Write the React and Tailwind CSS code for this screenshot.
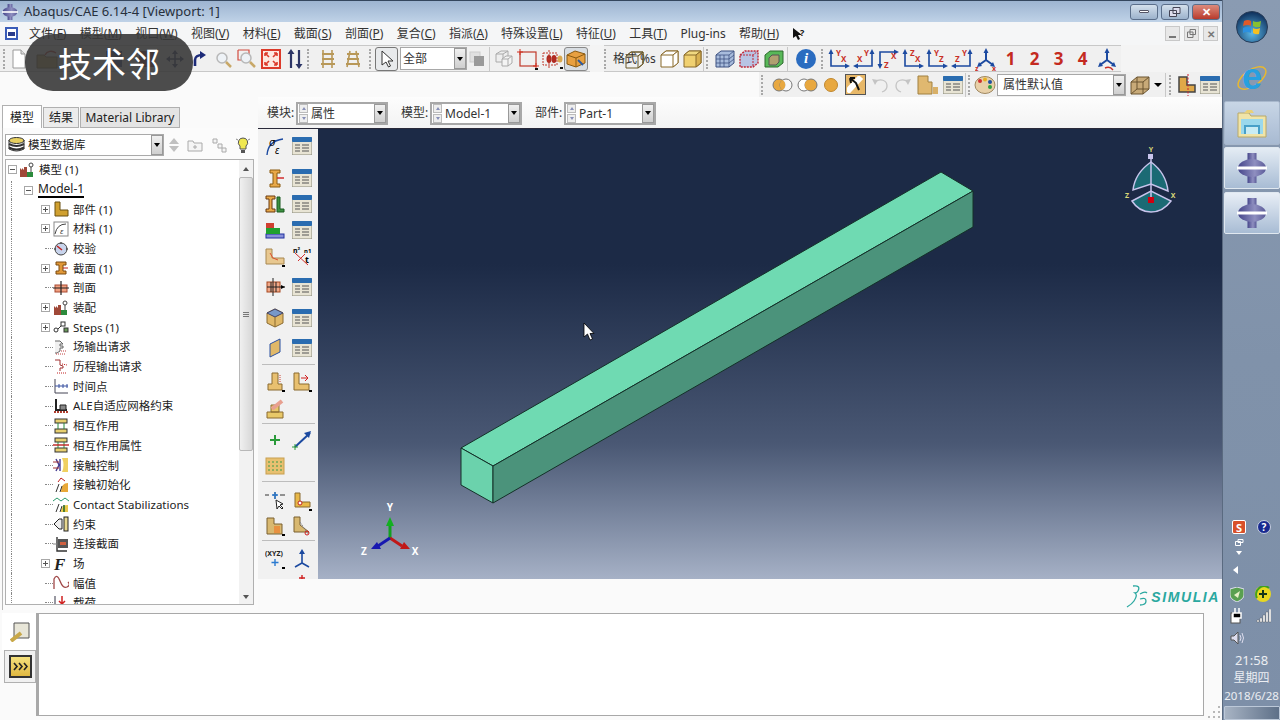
import React from "react";

const Sv = ({ w = 20, h = 20, children, className }) => (
  <svg width={w} height={h} viewBox={`0 0 ${w} ${h}`} className={className}>
    {children}
  </svg>
);

const Grip = () => <div className="h-[20px] w-0 border-l-2 border-dotted border-[#a8a8a8]" />;
const Sep = () => <div className="h-[24px] w-px bg-[#c8c8c8]" />;

// toolbar icons
const Page = () => (
  <Sv w={16} h={20}>
    <path d="M2 1h8l4 4v14H2z" fill="#fff" stroke="#9a9a9a" />
    <path d="M10 1v4h4" fill="#ddd" stroke="#9a9a9a" />
  </Sv>
);
const Folder = () => (
  <Sv w={24} h={20}>
    <path d="M1 6h7l2 2h11v11H1z" fill="#c9a961" stroke="#7d6a38" />
    <path d="M9 6c2-4 7-5 11-2" fill="none" stroke="#c62e22" strokeWidth="1.5" />
  </Sv>
);
const MoveIco = () => (
  <Sv w={18} h={18}>
    <path d="M9 1v16M1 9h16" stroke="#2c3566" strokeWidth="1.6" />
    <path d="M9 0l3 4H6zM9 18l3-4H6zM0 9l4-3v6zM18 9l-4-3v6z" fill="#2c3566" />
  </Sv>
);
const RotateIco = () => (
  <Sv w={16} h={18}>
    <path d="M4 16V10c0-3 3-5 7-5" fill="none" stroke="#1c2a78" strokeWidth="2.6" />
    <path d="M9 1l6 4-6 4z" fill="#1c2a78" />
  </Sv>
);
const Mag = ({ box }) => (
  <Sv w={20} h={20}>
    {box && <path d="M1 1h11v9" fill="none" stroke="#d24b3f" strokeWidth="1.2" />}
    {box && <path d="M1 1v10h4" fill="none" stroke="#d24b3f" strokeWidth="1.2" />}
    <circle cx="9" cy="9" r="5" fill="#eef2f6" stroke="#b8b8b8" strokeWidth="1.5" />
    <path d="M13 13l5 5" stroke="#c8a868" strokeWidth="2.5" />
  </Sv>
);
const Fit = () => (
  <Sv w={20} h={20}>
    <rect x="1" y="1" width="18" height="18" fill="#fde8e0" stroke="#dc3a2a" strokeWidth="2" />
    <path d="M4 4l4 4M16 4l-4 4M4 16l4-4M16 16l-4-4M4 4h3M4 4v3M16 4h-3M16 4v3M4 16h3M4 16v-3M16 16h-3M16 16v-3" stroke="#dc3a2a" strokeWidth="1.6" />
  </Sv>
);
const UpDown = () => (
  <Sv w={16} h={20}>
    <path d="M4 4v15M12 1v15" stroke="#2c3566" strokeWidth="2.2" />
    <path d="M4 0l3.500 5h-7zM12 20l3.500-5h-7z" fill="#2c3566" />
  </Sv>
);
const Ladder = ({ wide }) => (
  <Sv w={18} h={20}>
    <path d={wide ? "M6 2L3 18M12 2l3 16" : "M4 1v18M13 1v18"} stroke="#b89858" strokeWidth="1.6" />
    <path d="M3 5h12M3 10h12M2 15h14" stroke="#b89858" strokeWidth="2" />
  </Sv>
);
const CursorBtn = () => (
  <div className="flex h-[24px] w-[23px] items-center justify-center rounded-[3px] border border-[#777] bg-[#e8eaec]">
    <Sv w={14} h={18}>
      <path d="M2 1v14l4-3 2.500 5 2-1-2.500-5h5z" fill="#fff" stroke="#333" />
    </Sv>
  </div>
);
const GraySq = () => (
  <Sv w={16} h={18}>
    <rect x="1" y="2" width="10" height="10" fill="#e0e0e0" stroke="#ccc" />
    <rect x="5" y="6" width="10" height="10" fill="#9a9a9a" />
  </Sv>
);
const WireBoxes = () => (
  <Sv w={20} h={20}>
    <path d="M2 5l5-3h7v8l-5 3H2zM2 5h7v8M9 5l5-3" fill="#eee" stroke="#aaa" />
    <path d="M8 10l4-3h6v7l-4 3H8zM8 10h6v7M14 10l4-3" fill="#f4f4f4" stroke="#aaa" />
  </Sv>
);
const RedRect = () => (
  <Sv w={22} h={22}>
    <rect x="3" y="4" width="16" height="14" fill="none" stroke="#c0392b" strokeWidth="1.2" />
    <path d="M3 1v6M0 4h6M19 15v6M16 18h6" stroke="#d03020" />
    <rect x="18" y="20" width="3" height="2" fill="#111" />
  </Sv>
);
const RedDots = () => (
  <Sv w={22} h={22}>
    <rect x="2" y="5" width="14" height="12" fill="none" stroke="#c0392b" strokeDasharray="2 1" />
    <ellipse cx="8" cy="11" rx="2.500" ry="4" fill="#b02a20" />
    <ellipse cx="13" cy="11" rx="2.500" ry="4" fill="#b02a20" />
    <ellipse cx="19" cy="11" rx="2.500" ry="3.500" fill="#d8a850" />
    <path d="M8 2v18" stroke="#c0392b" strokeDasharray="2 2" />
    <rect x="19" y="19" width="3" height="2" fill="#111" />
  </Sv>
);
const Cube = ({ top = "#f0d890", left = "#fff", right = "#fff", stroke = "#8a6a2a", w = 20, h = 20 }) => (
  <Sv w={w} h={h}>
    <path d="M1 6l5-4h12v12l-5 4H1z" fill={left} stroke={stroke} />
    <path d="M1 6l5-4h12l-5 4z" fill={top} stroke={stroke} />
    <path d="M13 6l5-4v12l-5 4z" fill={right} stroke={stroke} />
  </Sv>
);
const ActiveCube = () => (
  <div className="flex h-[24px] w-[24px] items-center justify-center rounded-[3px] border border-[#888] bg-[#d8dde2]">
    <Sv w={20} h={18}>
      <path d="M1 5l8-4 10 3v9l-9 4-9-3z" fill="#e8a040" stroke="#8a5a10" />
      <path d="M1 5l9 3 9-4M10 8v9" fill="none" stroke="#8a5a10" />
      <path d="M12 10l5 5" stroke="#2c5aa0" strokeWidth="2" />
    </Sv>
  </div>
);
const GridCube = () => (
  <Sv w={20} h={20}>
    <path d="M1 6l5-4h13v12l-5 4H1z" fill="#a8bcdc" stroke="#3c5080" />
    <path d="M1 6h13l5-4M14 6v12M5 6v12M9 6v12M1 10h13M1 14h13M14 10l5-4M14 14l5-4" fill="none" stroke="#3c5080" strokeWidth=".8" />
  </Sv>
);
const RedCube = () => (
  <Sv w={20} h={20}>
    <path d="M1 6l5-4h13v12l-5 4H1z" fill="#b8c4e4" stroke="#c02838" strokeDasharray="2 1" strokeWidth="1.4" />
    <path d="M1 6h13l5-4M14 6v12" fill="none" stroke="#c02838" strokeDasharray="2 1" />
  </Sv>
);
const GreenCube = () => (
  <Sv w={20} h={20}>
    <path d="M1 6l5-4h13v12l-5 4H1z" fill="#58b858" stroke="#2c6a2c" />
    <path d="M5 9l3-3h7v7l-3 3H5z" fill="#b0a070" stroke="#555" />
  </Sv>
);
const InfoIco = () => (
  <div className="flex h-[20px] w-[20px] items-center justify-center rounded-full bg-[#2a6cc0] text-[15px] font-bold italic leading-none text-white [font-family:'Liberation_Serif',serif]">
    i
  </div>
);
const Axes = ({ kind, a, b }) => {
  const d = {
    lu: "M3 5V18H19",
    ru: "M19 5V18H3",
    ld: "M3 17V4H19",
  }[kind];
  const heads = {
    lu: "M3 1l2.500 5h-5zM22 18l-5-2.500v5z",
    ru: "M19 1l2.500 5h-5zM0 18l5-2.500v5z",
    ld: "M3 21l2.500-5h-5zM22 4l-5-2.500v5z",
  }[kind];
  const pa = { lu: [8, 8], ru: [11, 8], ld: [7, 20] }[kind];
  const pb = { lu: [13, 14], ru: [4, 14], ld: [14, 11] }[kind];
  return (
    <Sv w={22} h={22}>
      <path d={d} fill="none" stroke="#1c4aa0" strokeWidth="1.6" />
      <path d={heads} fill="#1c4aa0" />
      <text x={pa[0]} y={pa[1]} fontSize="8" fontWeight="700" fill="#c83028">{a}</text>
      <text x={pb[0]} y={pb[1]} fontSize="8" fontWeight="700" fill="#c83028">{b}</text>
    </Sv>
  );
};
const Triad = ({ curve }) => (
  <Sv w={22} h={24}>
    <path d="M11 4v9L4 18M11 13l7 5" fill="none" stroke="#1c4aa0" strokeWidth="2" />
    <path d="M11 1l2.500 5h-5zM2 20l2-5 3 4zM20 20l-2-5-3 4z" fill="#1c4aa0" />
    {curve ? (
      <path d="M9 21q5-2 8 2" fill="none" stroke="#c83028" strokeWidth="1.4" />
    ) : (
      <>
        <text x="0" y="24" fontSize="7" fontWeight="700" fill="#c83028">z</text>
        <text x="17" y="24" fontSize="7" fontWeight="700" fill="#c83028">x</text>
      </>
    )}
  </Sv>
);
const Venn = ({ side }) => (
  <Sv w={22} h={16}>
    <circle cx="7" cy="8" r="6" fill={side === "l" ? "#e8a840" : "#fff"} stroke="#777" />
    <circle cx="14" cy="8" r="6" fill={side === "r" ? "#e8a840" : "#fff"} fillOpacity={side === "r" ? 1 : 0.5} stroke="#777" />
    <path d="M10.500 3a6 6 0 010 10 6 6 0 010-10z" fill="#e8a840" />
  </Sv>
);
const HandBtn = () => (
  <div className="flex h-[21px] w-[21px] items-center justify-center border border-[#555] bg-[#e8b868]">
    <Sv w={17} h={17}>
      <path d="M14 1L0 16" stroke="#fff" strokeWidth="6" />
      <path d="M3 2l6 5 3 7M3 2l1 5M3 2l5 0" fill="none" stroke="#111" strokeWidth="2" />
    </Sv>
  </div>
);
const Undo = ({ flip }) => (
  <Sv w={18} h={18} className={flip ? "-scale-x-100" : ""}>
    <path d="M4 6c5-4 12-2 12 4 0 3-2 5-5 6" fill="none" stroke="#c4c4c4" strokeWidth="1.3" />
    <path d="M1 3l6 1-3 5z" fill="#c4c4c4" />
  </Sv>
);
const Blocks = () => (
  <Sv w={22} h={20}>
    <path d="M1 1h10v6h4v12H1z" fill="#e0b870" stroke="#a08040" />
    <rect x="16" y="12" width="5" height="7" fill="#d8b068" />
  </Sv>
);
const Tbl = () => (
  <Sv w={20} h={18}>
    <rect x="0" y="0" width="20" height="18" rx="1" fill="#e8e4d4" stroke="#8a8a7a" />
    <rect x="0" y="0" width="20" height="5" rx="1" fill="#2a6cb0" />
    <path d="M3 8h5M10 8h7M3 11h5M10 11h7M3 14h5M10 14h7" stroke="#555" />
  </Sv>
);
const Palette = () => (
  <Sv w={22} h={20}>
    <ellipse cx="11" cy="10" rx="10" ry="8.500" fill="#e8d0a8" stroke="#a08860" />
    <circle cx="6" cy="6" r="2" fill="#d03030" />
    <circle cx="11" cy="4.500" r="2" fill="#e8b020" />
    <circle cx="16" cy="7" r="2" fill="#2050a0" />
    <circle cx="16" cy="12" r="2" fill="#30a040" />
  </Sv>
);
const ShellCube = () => (
  <Sv w={20} h={20}>
    <path d="M1 7l6-5h12v12l-6 5H1z" fill="#c8aa78" stroke="#6a5430" />
    <path d="M1 7h12v12M13 7l6-5M1 19l6-5h12M7 2v12" fill="none" stroke="#6a5430" />
  </Sv>
);
const SectionIco = () => (
  <Sv w={18} h={22}>
    <path d="M1 3h8v8h8v7H1z" fill="#e0a848" stroke="#444" strokeWidth="1.5" />
    <path d="M10 0v22" stroke="#d02030" strokeDasharray="2 1.500" />
  </Sv>
);
const DropBtn = ({ w = "w-[12px]" }) => (
  <div className={`flex ${w} items-center justify-center border border-[#999] bg-gradient-to-b from-[#f0f0f0] to-[#cfcfcf]`}>
    <div className="h-0 w-0 border-x-[3.5px] border-t-[4px] border-x-transparent border-t-black" />
  </div>
);
const Spin = () => (
  <div className="flex w-[9px] flex-col justify-center gap-px">
    <div className="flex h-[9px] items-center justify-center border border-[#bbb] bg-[#eee]">
      <div className="h-0 w-0 border-x-[2.5px] border-b-[3px] border-x-transparent border-b-[#8890b8]" />
    </div>
    <div className="flex h-[9px] items-center justify-center border border-[#bbb] bg-[#eee]">
      <div className="h-0 w-0 border-x-[2.5px] border-t-[3px] border-x-transparent border-t-[#8890b8]" />
    </div>
  </div>
);
const ModCombo = ({ text }) => (
  <div className="flex h-[23px] w-[92px] border-2 border-[#a8a8a8] bg-white pl-px">
    <Spin />
    <div className="flex-1 pl-[3px] text-[12px] leading-[19px] text-[#333]">{text}</div>
    <DropBtn />
  </div>
);

// tree icons
const ti = {
  model: (
    <>
      <path d="M1 15V6l2 2V6l2 2V5h3v10z" fill="#a04838" />
      <rect x="8" y="10" width="6" height="5" fill="#2c8a3c" />
      <circle cx="12" cy="3" r="2" fill="none" stroke="#444" />
      <path d="M12 5v5" stroke="#444" />
    </>
  ),
  part: <path d="M2 1h5v8h8v6H2z" fill="#d0a030" stroke="#6a5010" />,
  material: (
    <>
      <rect x="1" y="1" width="14" height="14" fill="#fff" stroke="#888" />
      <path d="M2 13Q4 3 13 3" fill="none" stroke="#444" />
      <text x="7" y="13" fontSize="8" fontStyle="italic" fill="#333">ε</text>
    </>
  ),
  check: (
    <>
      <circle cx="8" cy="8" r="6" fill="#c8d4ec" stroke="#444" />
      <path d="M4 5l5 4" stroke="#c02020" strokeWidth="1.6" />
      <path d="M8 1v2M1 8h2M15 8h-2" stroke="#333" />
    </>
  ),
  section: (
    <>
      <path d="M3 2h10v3h-3v6h3v3H3v-3h3V5H3z" fill="#e09838" stroke="#7a4a10" />
      <path d="M10 8h5" stroke="#c02020" />
    </>
  ),
  profile: (
    <>
      <rect x="2" y="5" width="12" height="7" fill="#f0a080" stroke="#a84830" />
      <path d="M0 8h16M8 1v14" stroke="#222" strokeWidth="1.2" />
    </>
  ),
  steps: (
    <>
      <circle cx="3" cy="11" r="2" fill="#fff" stroke="#333" />
      <path d="M5 10l3-3" stroke="#333" />
      <rect x="8" y="3" width="4" height="4" fill="#fff" stroke="#333" />
      <rect x="11" y="9" width="4" height="4" fill="#6a9a5a" stroke="#333" />
    </>
  ),
  field: (
    <>
      <path d="M2 2h5l3 3H7v2h3v2H7v3l-3 2h-2" fill="#f0f0f0" stroke="#666" />
      <path d="M8 12h6M3 15h10" stroke="#c04040" strokeDasharray="1 1" />
    </>
  ),
  history: (
    <>
      <path d="M2 1h5v5l3 1v2H7v3" fill="#fff" stroke="#a03030" />
      <path d="M9 5l5 1M4 14h10" stroke="#c02020" strokeDasharray="1 1" />
    </>
  ),
  time: (
    <>
      <path d="M2 1v14h13" fill="none" stroke="#445" />
      <path d="M2 8h13M6 6v4M10 6v4M14 6v4" stroke="#3850a0" />
    </>
  ),
  ale: (
    <>
      <path d="M3 1v11h11" fill="none" stroke="#222" strokeWidth="2" />
      <path d="M7 7h6v5H7z" fill="#888" stroke="#222" />
      <path d="M1 14h14" stroke="#b04030" strokeDasharray="2 1" strokeWidth="2" />
    </>
  ),
  inter: (
    <>
      <rect x="2" y="1" width="12" height="4" fill="#e8d070" stroke="#333" />
      <rect x="2" y="11" width="12" height="4" fill="#e8d070" stroke="#333" />
      <path d="M5 5v6M11 5v6" stroke="#2a8a3a" />
    </>
  ),
  interProp: (
    <>
      <rect x="2" y="1" width="12" height="4" fill="#e8d070" stroke="#333" />
      <rect x="2" y="11" width="12" height="4" fill="#e8d070" stroke="#333" />
      <path d="M5 5v6M11 5v6" stroke="#2a8a3a" />
      <path d="M0 8h16" stroke="#c02020" strokeWidth="1.4" />
    </>
  ),
  control: (
    <>
      <path d="M9 1h6v14H9q3-7 0-14z" fill="#f0d060" />
      <path d="M3 2l3 6-3 6M7 2v12" fill="none" stroke="#443a90" strokeWidth="1.4" />
      <path d="M0 5h6M0 11h6" stroke="#a03030" />
    </>
  ),
  contactInit: (
    <>
      <path d="M8 15q0-9 7-9v9z" fill="#e8a838" />
      <path d="M3 15l3-8M7 15l2-6" stroke="#333" />
      <path d="M5 5l3-4 4 3" fill="none" stroke="#c02020" />
    </>
  ),
  stab: (
    <>
      <path d="M8 15q0-7 7-7v7z" fill="#e8c848" />
      <path d="M3 15l3-8M7 15l2-6" stroke="#333" />
      <path d="M0 4l4-3 4 3 4-3 4 3" fill="none" stroke="#2a9a6a" />
      <path d="M11 8v7" stroke="#2a6a2a" strokeWidth="1.6" />
    </>
  ),
  bc: (
    <>
      <path d="M1 8l5-5h3v10H6z" fill="#eee" stroke="#222" />
      <rect x="11" y="1" width="4" height="14" fill="#e8d890" stroke="#222" />
    </>
  ),
  conn: (
    <>
      <path d="M4 1v14h10" fill="none" stroke="#333" strokeWidth="1.4" />
      <rect x="5" y="3" width="10" height="9" fill="#555" />
      <rect x="7" y="6" width="6" height="3" fill="#d06040" />
      <path d="M0 8h4" stroke="#888" />
    </>
  ),
  fieldF: (
    <text x="1" y="14" fontSize="17" fontWeight="700" fontStyle="italic" fontFamily="Liberation Serif" fill="#222">F</text>
  ),
  amp: <path d="M1 14V4q3-6 6 2t7 6 1-5" fill="none" stroke="#a04848" strokeWidth="1.3" />,
  load: (
    <>
      <path d="M2 1v11h12v3H2" fill="#8fa8d0" stroke="#334" />
      <path d="M9 1v8M6 6l3 3 3-3" fill="none" stroke="#d02020" strokeWidth="1.5" />
    </>
  ),
};
const TI = ({ n }) => <Sv w={16} h={16}>{ti[n]}</Sv>;

const Expander = ({ open }) => (
  <div className="relative flex h-[9px] w-[9px] shrink-0 items-center justify-center border border-[#a8a8a8] bg-white">
    <div className="h-px w-[5px] bg-[#555]" />
    {!open && <div className="absolute h-[5px] w-px bg-[#555]" />}
  </div>
);

const treeRows = [
  { n: "part", label: "部件 (1)", exp: true },
  { n: "material", label: "材料 (1)", exp: true },
  { n: "check", label: "校验" },
  { n: "section", label: "截面 (1)", exp: true },
  { n: "profile", label: "剖面" },
  { n: "model", label: "装配", exp: true },
  { n: "steps", label: "Steps (1)", exp: true },
  { n: "field", label: "场输出请求" },
  { n: "history", label: "历程输出请求" },
  { n: "time", label: "时间点" },
  { n: "ale", label: "ALE自适应网格约束" },
  { n: "inter", label: "相互作用" },
  { n: "interProp", label: "相互作用属性" },
  { n: "control", label: "接触控制" },
  { n: "contactInit", label: "接触初始化" },
  { n: "stab", label: "Contact Stabilizations" },
  { n: "bc", label: "约束" },
  { n: "conn", label: "连接截面" },
  { n: "fieldF", label: "场", exp: true },
  { n: "amp", label: "幅值" },
  { n: "load", label: "载荷" },
];

const TreeRow = ({ n, label, exp }) => (
  <div className="flex h-[19.7px] shrink-0 items-center">
    <div className="ml-[5px] h-full w-[30px] border-l border-dotted border-[#888]" />
    {exp ? <Expander /> : <div className="w-[9px] pl-[4px]"><div className="w-[8px] border-t border-dotted border-[#888]" /></div>}
    <div className="ml-[3px] w-[20px]"><TI n={n} /></div>
    <span className="whitespace-nowrap text-[11.5px]">{label}</span>
  </div>
);

const Scrollbar = () => (
  <div className="flex w-[14px] shrink-0 flex-col items-center bg-[#f2f2f2]">
    <div className="flex h-[17px] items-center justify-center">
      <div className="h-0 w-0 border-x-[3.5px] border-b-[4px] border-x-transparent border-b-[#555]" />
    </div>
    <div className="flex h-[274px] w-full flex-col items-center justify-center gap-px rounded-[2px] border border-[#b8b8b8] bg-gradient-to-r from-[#f0f0f0] to-[#d8d8d8]">
      <div className="h-px w-[6px] bg-[#777]" />
      <div className="h-px w-[6px] bg-[#777]" />
      <div className="h-px w-[6px] bg-[#777]" />
    </div>
    <div className="flex-1" />
    <div className="flex h-[14px] items-center justify-center">
      <div className="h-0 w-0 border-x-[3.5px] border-t-[4px] border-x-transparent border-t-[#555]" />
    </div>
  </div>
);

const LeftPanel = () => (
  <div className="flex w-[258px] shrink-0 flex-col pl-[2px] pt-[8px]">
    <div className="flex h-[23px] items-end text-[12px] text-[#222]">
      <div className="flex h-[23px] w-[40px] items-center justify-center border border-b-0 border-[#b0b0b0] bg-white pt-[2px]">模型</div>
      <div className="ml-px flex h-[21px] w-[36px] items-center justify-center border border-[#b0b0b0] bg-[#ececec] pt-px">结果</div>
      <div className="ml-px flex h-[21px] w-[100px] items-center justify-center border border-[#b0b0b0] bg-[#e4e4e4] pt-px">Material Library</div>
    </div>
    <div className="flex h-[482px] flex-col border-l border-[#b8b8b8] bg-[#fbfbfb] pl-[2px] text-[12px] text-[#222]">
      <div className="mt-[6px] flex h-[22px] items-center">
        <div className="flex h-[22px] w-[159px] border border-[#aaa] bg-white">
          <div className="flex flex-1 items-center gap-[3px] pl-[2px]">
            <Sv w={17} h={16}>
              <ellipse cx="8.500" cy="3.500" rx="7.500" ry="3" fill="#e8d060" stroke="#333" />
              <path d="M1 7q7.500 4 15 0M1 10.500q7.500 4 15 0" fill="none" stroke="#333" strokeWidth="2" />
              <path d="M1 3v9q7.500 4 15 0V3" fill="none" stroke="#333" />
            </Sv>
            <span className="text-[11.5px]">模型数据库</span>
          </div>
          <DropBtn />
        </div>
        <div className="ml-[5px] flex w-[10px] flex-col gap-[2px]">
          <div className="h-0 w-0 border-x-[5px] border-b-[6px] border-x-transparent border-b-[#c0c0c0]" />
          <div className="h-0 w-0 border-x-[5px] border-t-[6px] border-x-transparent border-t-[#c0c0c0]" />
        </div>
        <div className="ml-[8px] w-[24px]">
          <Sv w={16} h={14}>
            <path d="M1 3h5l1 2h8v8H1z" fill="#f4f4f4" stroke="#aaa" />
            <path d="M8 7v4M6 9h4" stroke="#aaa" />
          </Sv>
        </div>
        <div className="w-[25px]">
          <Sv w={16} h={16}>
            <path d="M2 2h4v4H2zM7 7h4v4H7zM11 11h4v4h-4z" fill="#f4f4f4" stroke="#aaa" />
          </Sv>
        </div>
        <Sv w={14} h={18}>
          <path d="M7 2a4.500 4.500 0 00-3 8v3h6v-3a4.500 4.500 0 00-3-8z" fill="#f0e850" stroke="#555" />
          <path d="M5 14h4v3H5z" fill="#555" />
          <path d="M0 3l2 1M14 3l-2 1" stroke="#888" />
        </Sv>
      </div>
      <div className="mt-[3px] flex h-[446px] w-[249px] overflow-hidden border border-[#b0b0b0] bg-white">
        <div className="flex-1 overflow-hidden">
          <div className="flex h-[19.7px] items-center pl-[2px]">
            <Expander open />
            <div className="ml-[2px] w-[17px]"><TI n="model" /></div>
            <span className="ml-[3px] text-[11.5px]">模型 (1)</span>
          </div>
          <div className="flex h-[19.7px] items-center pt-px">
            <div className="ml-[5px] h-full w-[13px] border-l border-dotted border-[#888]" />
            <Expander open />
            <span className="ml-[5px] border-b-2 border-black leading-[14px]">Model-1</span>
          </div>
          {treeRows.map((r) => (
            <TreeRow key={r.label} {...r} />
          ))}
        </div>
        <Scrollbar />
      </div>
    </div>
  </div>
);

const Small = ({ c }) => <Sv w={20} h={20}>{c}</Sv>;
const toolRows = [
  { mt: "mt-[5px]", a: <Small c={<><path d="M2 19Q3 5 18 3" fill="none" stroke="#1c4aa0" strokeWidth="1.4" /><text x="4" y="10" fontSize="11" fontStyle="italic">σ</text><text x="10" y="18" fontSize="10" fontStyle="italic">ε</text></>} />, b: <Tbl /> },
  { mt: "mt-[8px]", a: <Small c={<><path d="M5 2h10v3h-3v11h3v3H5v-3h3V5H5z" fill="#e8a848" stroke="#8a5a10" /><path d="M12 10h7" stroke="#d02020" strokeWidth="1.4" /></>} />, b: <Tbl /> },
  { mt: "mt-[2px]", a: <Small c={<><path d="M1 2h9v3H7v10h3v3H1v-3h3V5H1z" fill="#e8a848" stroke="#6a3a10" /><path d="M12 3h3v12h4v3h-7z" fill="#3c9040" stroke="#1a5a20" /></>} />, b: <Tbl /> },
  { mt: "mt-[2px]", a: <Small c={<><rect x="1" y="14" width="18" height="4" fill="#8890d8" stroke="#2030a0" /><rect x="1" y="8" width="14" height="6" fill="#20a030" /><rect x="1" y="3" width="8" height="5" fill="#d04030" /></>} />, b: <Tbl /> },
  { mt: "mt-[3px]", a: <Small c={<><path d="M1 2h6v9h12v6H1z" fill="#e8c890" stroke="#a88850" /><path d="M5 6l3 5 5 2" fill="none" stroke="#e05030" /><rect x="17" y="18" width="3" height="2" /></>} />, b: <Small c={<><text x="1" y="6" fontSize="7" fontWeight="700">n²</text><text x="12" y="6" fontSize="6" fontWeight="700">n1</text><path d="M3 6l13 12M6 14l7-7" stroke="#d03030" /><text x="13" y="16" fontSize="9" fontWeight="700">t</text></>} /> },
  { mt: "mt-[6px]", a: <Small c={<><rect x="2" y="5" width="13" height="10" fill="#f0a888" stroke="#a84820" /><path d="M6 5v10M11 5v10M2 10h18M8 1v18" stroke="#222" /><path d="M20 10l-4-2v4z" /></>} />, b: <Tbl /> },
  { mt: "mt-[7px]", a: <Small c={<><path d="M10 1l8 4v10l-8 4-8-4V5z" fill="#e0b868" stroke="#8a6a30" /><path d="M10 1l8 4-8 4-8-4z" fill="#7898c8" stroke="#446" /><path d="M10 9v10" stroke="#8a6a30" /></>} />, b: <Tbl /> },
  { mt: "mt-[6px]", a: <Small c={<path d="M5 6l10-5v13L5 19z" fill="#e0b868" stroke="#2a50a0" />} />, b: <Tbl /> },
  { sep: true, mt: "mt-[4px]" },
  { mt: "mt-[5px]", a: <Small c={<><path d="M7 1h6v11h4v6H3v-6h4z" fill="#e8c070" stroke="#8a6a30" /><path d="M15 3v8" stroke="#d04030" strokeDasharray="1 1" /><rect x="17" y="18" width="3" height="2" /></>} />, b: <Small c={<><path d="M2 1h5v11h10v6H2z" fill="#e8c070" stroke="#8a6a30" /><path d="M9 6h7M13 3l3 3-3 3" fill="none" stroke="#d02020" /><rect x="17" y="18" width="3" height="2" /></>} /> },
  { mt: "mt-[3px]", a: <Small c={<><path d="M2 13h16v6H2zM6 6h8v7H6z" fill="#e8c868" stroke="#8a6a30" /><path d="M7 10l10-8" stroke="#e8a090" strokeWidth="4" /></>} /> },
  { sep: true, mt: "mt-[2px]" },
  { mt: "mt-[4px]", a: <Small c={<path d="M10 5v10M5 10h10" stroke="#2a9a3a" strokeWidth="2" />} />, b: <Small c={<><path d="M3 17L18 3" stroke="#1c4aa0" strokeWidth="2" /><path d="M19 1l-2 7-5-5z" fill="#1c4aa0" /><path d="M3 14v6M0 17h6" stroke="#2a9a3a" /></>} /> },
  { mt: "mt-[2px]", a: <Small c={<><rect x="1" y="2" width="18" height="16" fill="#e8c070" stroke="#c8a050" /><path d="M3 6h14M3 10h14M3 14h14" stroke="#3a9a4a" strokeDasharray="2 2" /></>} /> },
  { sep: true, mt: "mt-[3px]" },
  { mt: "mt-[7px]", a: <Small c={<><path d="M0 4h4M15 4h5M8 4h4M10 1v7" stroke="#333" /><path d="M10 1v7M7 4h6" stroke="#2a7ad0" strokeWidth="1.4" /><path d="M11 9l1 9 2-3 3 3 1-1-3-3 3-1z" fill="#fff" stroke="#222" /></>} />, b: <Small c={<><path d="M3 2h5v9h10v5H3z" fill="#e8b848" stroke="#8a6a30" /><circle cx="8" cy="12" r="2" fill="#fff" stroke="#c02020" /><rect x="17" y="18" width="3" height="2" /></>} /> },
  { mt: "mt-px", a: <Small c={<><path d="M2 2h7v6h8v10H2z" fill="#d8b870" stroke="#7a6030" /><path d="M9 10h6v7H9z" fill="#e89040" /><rect x="17" y="18" width="3" height="2" /></>} />, b: <Small c={<><path d="M2 1h6v8l9 7H2z" fill="#d8b870" stroke="#7a6030" /><path d="M8 6l8 12" stroke="#888" strokeDasharray="2 1" /><circle cx="15" cy="17" r="2" fill="none" stroke="#d02020" /></>} /> },
  { sep: true, mt: "mt-[2px]" },
  { mt: "mt-[6px]", a: <Small c={<><text x="0" y="7" fontSize="7" fontWeight="700" fill="#222">(XYZ)</text><path d="M10 10v7M6.500 13.500h7" stroke="#2a7ad0" strokeWidth="1.4" /><rect x="17" y="18" width="3" height="2" /></>} />, b: <Small c={<><path d="M10 4v10L3 18M10 14l7 4" fill="none" stroke="#1c4aa0" strokeWidth="1.6" /><path d="M10 0l3 5H7z" fill="#1c4aa0" /></>} /> },
  { mt: "mt-0", a: <Small c={<path d="M4 8l4 4M16 8l-4 4" stroke="#1c4aa0" strokeWidth="1.6" />} />, b: <Small c={<path d="M10 2v6M7 5h6" stroke="#d02020" strokeWidth="1.4" />} /> },
];

const Toolbox = () => (
  <div className="flex h-[450px] w-[60px] shrink-0 flex-col overflow-hidden bg-[#f1f1f1] pl-[4px] pr-[3px]">
    {toolRows.map((r, i) =>
      r.sep ? (
        <div key={i} className={`${r.mt} h-px w-full shrink-0 bg-[#bdbdbd]`} />
      ) : (
        <div key={i} className={`${r.mt} flex h-[24px] shrink-0 items-center`}>
          <div className="flex w-[25px] justify-center">{r.a}</div>
          <div className="ml-[3px] flex w-[24px] justify-center">{r.b}</div>
        </div>
      )
    )}
  </div>
);

const Viewport = () => (
  <div className="relative h-[450px] flex-1 bg-gradient-to-b from-[#1c2a46] from-30% via-[#4a5874] via-70% to-[#a6b1c6]">
    <svg className="absolute inset-0" width="904" height="450" viewBox="318 128 904 450">
      {/* beam */}
      <path d="M461 447L941 171L973 190L493 465Z" fill="#6fdab2" stroke="#143028" strokeWidth="1" />
      <path d="M461 447L493 465V502L461 484Z" fill="#6bd2ac" stroke="#143028" strokeWidth="1" />
      <path d="M493 465L973 190V226L493 502Z" fill="#4b937b" stroke="#143028" strokeWidth="1" />
      {/* triad */}
      <path d="M390 537V524" stroke="#12a020" strokeWidth="3" />
      <path d="M390 516l4 9h-8z" fill="#12b020" />
      <path d="M390 537L402 545" stroke="#c01818" strokeWidth="3" />
      <path d="M410 548l-10 0 4-7z" fill="#c01818" />
      <path d="M390 537L378 545" stroke="#1818b0" strokeWidth="3" />
      <path d="M371 548l10 0-4-7z" fill="#1818b0" />
      <text x="390" y="510" fontSize="10" fontWeight="700" fill="#fff" textAnchor="middle">Y</text>
      <text x="415" y="554" fontSize="10" fontWeight="700" fill="#fff" textAnchor="middle">X</text>
      <text x="364" y="554" fontSize="10" fontWeight="700" fill="#fff" textAnchor="middle">Z</text>
      {/* compass */}
      <path d="M1151 161Q1135 172 1133 189L1151 183L1168 190Q1166 172 1151 161Z" fill="#1b6a74" stroke="#c8c4ec" strokeWidth="1.500" />
      <path d="M1132 200L1151 190L1171 200Q1163 211 1151 211Q1139 211 1132 200Z" fill="#1b6a74" stroke="#c8c4ec" strokeWidth="1.500" />
      <path d="M1151 156V198" stroke="#c8c4ec" strokeWidth="1.500" />
      <rect x="1148" y="153" width="5" height="5" fill="#c8c4ec" />
      <rect x="1148" y="196" width="6" height="6" fill="#d00010" />
      <text x="1151" y="151" fontSize="7" fontWeight="700" fill="#d8d878" textAnchor="middle">Y</text>
      <text x="1127" y="197" fontSize="7" fontWeight="700" fill="#d8d878" textAnchor="middle">Z</text>
      <text x="1173" y="197" fontSize="7" fontWeight="700" fill="#d8d878" textAnchor="middle">X</text>
      {/* cursor */}
      <path d="M584 322V336L587.500 333L590 339L592.500 338L590 332.500H594Z" fill="#fff" stroke="#000" strokeWidth="0.800" />
    </svg>
  </div>
);

const SimuliaBar = () => (
  <div className="flex h-[34px] items-center justify-end pr-[2px] pt-[3px] font-['Liberation_Sans',sans-serif]">
    <Sv w={22} h={24} className="mr-[3px]">
      <path d="M7 1q8-1 5 5-1 2-3 2 3 2-1 8-2 3-7 6M14 9q5-3 7-1M14 14q6-2 6 2 0 4-6 4" fill="none" stroke="#2aa8a0" strokeWidth="1.3" />
    </Sv>
    <span className="text-[14px] font-bold italic leading-none tracking-[1.6px] text-[#2aa8a0]">SIMULIA</span>
  </div>
);

const Center = () => (
  <div className="flex flex-1 flex-col">
    <div className="flex h-[31px] items-center bg-gradient-to-b from-[#fdfdfd] to-[#f3f3f3] pl-[9px] pt-[2px] text-[12px] text-[#333]">
      <span className="w-[29px]">模块:</span>
      <ModCombo text="属性" />
      <span className="ml-[13px] w-[29px]">模型:</span>
      <ModCombo text="Model-1" />
      <span className="ml-[13px] w-[29px]">部件:</span>
      <ModCombo text="Part-1" />
    </div>
    <div className="flex border-t border-[#2a2a3a]">
      <Toolbox />
      <Viewport />
    </div>
    <SimuliaBar />
  </div>
);

const MenuItem = ({ t, k }) => (
  <span className="whitespace-nowrap">
    {t}(<span className="underline">{k}</span>)
  </span>
);

const AbaqusIcon = ({ s = 30 }) => (
  <svg width={s} height={s} viewBox="0 0 30 30">
    <defs>
      <linearGradient id="aq" x1="0" x2="1">
        <stop offset="0" stopColor="#45458a" />
        <stop offset="0.6" stopColor="#8f8fc0" />
        <stop offset="1" stopColor="#5a5a98" />
      </linearGradient>
    </defs>
    <rect x="10.500" y="0" width="9" height="30" fill="url(#aq)" />
    <ellipse cx="15" cy="15" rx="14" ry="9" fill="url(#aq)" />
    <rect x="0" y="13.500" width="30" height="3" fill="#fff" />
  </svg>
);

const WinBtn = ({ red, children }) => (
  <div className={`flex h-[16px] w-[28px] items-center justify-center rounded-[3px] border border-[#5a6e8a] ${red ? "bg-gradient-to-b from-[#dc8a7c] to-[#b8392c]" : "bg-gradient-to-b from-[#d4e0ec] to-[#9cb2cc]"}`}>
    {children}
  </div>
);

const MdiBtn = ({ children }) => (
  <div className="flex h-[15px] w-[15px] items-center justify-center border border-[#c8c8c8] bg-[#e8e8e8]">{children}</div>
);

const Taskbar = () => (
  <div className="flex h-[720px] w-[58px] shrink-0 flex-col items-center border-l border-[#5a6a80] bg-gradient-to-b from-[#8a9bb2] via-[#8092aa] to-[#7d8fa8]">
    <div className="mt-[11px]">
      <svg width="32" height="32" viewBox="0 0 32 32">
        <defs>
          <radialGradient id="orb" cx="50%" cy="70%" r="70%">
            <stop offset="0" stopColor="#5ab8e8" />
            <stop offset="1" stopColor="#0c2c58" />
          </radialGradient>
        </defs>
        <circle cx="16" cy="16" r="15.500" fill="url(#orb)" stroke="#283c58" />
        <path d="M8 10q4-2 7 0v5q-3-2-8 0z" fill="#e05a28" />
        <path d="M17 10q3 2 8 0l-1 6q-4 1-7-1z" fill="#88c030" />
        <path d="M7 17q4-2 8 0v5q-4-2-8 0z" fill="#2c90e0" />
        <path d="M17 17q3 2 7 0l-1 6q-3 1-6-1z" fill="#f4c020" />
      </svg>
    </div>
    <div className="mt-[18px] flex h-[34px] w-[34px] items-center justify-center">
      <svg width="34" height="34" viewBox="0 0 34 34">
        <ellipse cx="17" cy="17" rx="16" ry="8" transform="rotate(-35 17 17)" fill="none" stroke="#e8b830" strokeWidth="1.500" />
        <text x="17" y="28" fontSize="36" fontWeight="700" textAnchor="middle" fill="#28a0e0" fontFamily="Liberation Sans">e</text>
      </svg>
    </div>
    <div className="mt-[6px] flex h-[44px] w-[56px] items-center justify-center rounded-[2px] border border-[#a8b8cc] bg-gradient-to-b from-[#c8d6e6] to-[#a8bad2]">
      <Sv w={32} h={32}>
        <path d="M2 6h11l2 3h15v21H2z" fill="#f0e4a8" stroke="#b8a868" />
        <rect x="5" y="12" width="22" height="15" fill="#9ad8ec" />
        <path d="M8 6l3-3h5l2 3" fill="#e8d078" />
        <path d="M9 27V19h14v8" fill="#c8ecf4" stroke="#48a0c8" strokeWidth="2" />
      </Sv>
    </div>
    <div className="mt-[2px] flex h-[42px] w-[56px] items-center justify-center rounded-[2px] border border-[#e0e8f0] bg-gradient-to-b from-[#e4ecf4] to-[#a8bcd4]">
      <AbaqusIcon />
    </div>
    <div className="mt-[3px] flex h-[42px] w-[56px] items-center justify-center rounded-[2px] border border-[#e0e8f0] bg-gradient-to-b from-[#e8eef6] to-[#a8bcd4]">
      <AbaqusIcon />
    </div>
    <div className="flex-1" />
    <div className="flex w-full justify-between px-[9px]">
      <div className="flex h-[14px] w-[14px] items-center justify-center rounded-[2px] border border-white bg-[#d8502a] text-[11px] font-bold leading-none text-white">S</div>
      <div className="flex h-[14px] w-[14px] items-center justify-center rounded-full border border-[#c8d0e0] bg-[#182a90] text-[10px] font-bold leading-none text-white">?</div>
    </div>
    <div className="mt-[5px] w-full pl-[12px] leading-none">
      <Sv w={9} h={7}>
        <path d="M3 .5h5v3H3zM.5 2.500h5v4h-5z" fill="none" stroke="#fff" />
      </Sv>
    </div>
    <div className="mt-[5px] w-full pl-[13px]">
      <div className="h-0 w-0 border-x-[3px] border-t-[4px] border-x-transparent border-t-white" />
    </div>
    <div className="mt-[11px] w-full pl-[10px]">
      <div className="h-0 w-0 border-y-[4px] border-r-[5px] border-y-transparent border-r-white" />
    </div>
    <div className="mt-[12px] flex w-full items-center justify-between pl-[7px] pr-[9px]">
      <Sv w={14} h={15}>
        <path d="M7 0l7 2v6q0 4-7 7-7-3-7-7V2z" fill="#5aa050" stroke="#dde" />
        <path d="M4 8l6-4-2 7z" fill="#e8f0c8" />
      </Sv>
      <Sv w={16} h={16}>
        <circle cx="8" cy="8" r="8" fill="#e8d820" />
        <path d="M2 12a8 8 0 0112-10" fill="none" stroke="#40a020" strokeWidth="2" />
        <path d="M8 4v8M4 8h8" stroke="#143818" strokeWidth="2" />
      </Sv>
    </div>
    <div className="mt-[6px] flex w-full items-center justify-between pl-[7px] pr-[9px]">
      <Sv w={14} h={16}>
        <rect x="1" y="5" width="9" height="10" fill="#fff" stroke="#555" />
        <path d="M5 0v5M9 0v5M3 5h8v5H3z" stroke="#fff" strokeWidth="1.5" />
      </Sv>
      <Sv w={15} h={14}>
        <path d="M1 11h2v2H1zM4 9h2v4H4zM7 6h2v7H7zM10 3h2v10h-2zM13 0h2v13h-2z" fill="#fff" stroke="#555" strokeWidth=".4" />
      </Sv>
    </div>
    <div className="mt-[7px] w-full pl-[7px]">
      <Sv w={16} h={14}>
        <path d="M1 5h3l4-4v12l-4-4H1z" fill="#dde" stroke="#555" />
        <path d="M10 4q2 3 0 6M12 2q3 5 0 10" fill="none" stroke="#dde" />
      </Sv>
    </div>
    <div className="mt-[6px] flex flex-col items-center text-[12px] leading-[18px] text-white/85">
      <span className="text-[13px]">21:58</span>
      <span>星期四</span>
      <span className="whitespace-nowrap text-[11.5px]">2018/6/28</span>
    </div>
    <div className="mt-[1px] h-[14px] w-[56px] rounded-[1px] border border-[#bcc8d8] bg-gradient-to-r from-[#a8b4c4] to-[#5e7088]" />
  </div>
);

const Bottom = () => (
  <div className="flex h-[108px]">
    <div className="w-[36px] shrink-0 pl-[2px] pt-px">
      <div className="flex h-[37px] w-[34px] items-center justify-center bg-white pl-px">
        <Sv w={20} h={20}>
          <path d="M4 1h15v15H4z" fill="#e8e6d8" stroke="#555" />
          <path d="M1 19l10-8" stroke="#c8a848" strokeWidth="4" />
        </Sv>
      </div>
      <div className="ml-[2px] flex h-[33px] w-[32px] items-center justify-center border border-[#b0b0b0] bg-[#f0f0f0]">
        <div className="flex h-[23px] w-[23px] items-center justify-center border-2 border-[#333] bg-gradient-to-b from-[#f4e07c] to-[#e0b840]">
          <Sv w={15} h={9}>
            <path d="M1 1l3 3.500L1 8M6 1l3 3.500L6 8M11 1l3 3.500L11 8" fill="none" stroke="#222" strokeWidth="1.600" />
          </Sv>
        </div>
      </div>
    </div>
    <div className="mb-[4px] mt-px w-[1168px] border-b border-l-[3px] border-r border-t border-[#a8a8a8] bg-white" />
    <div className="flex flex-1 items-end justify-end pb-[2px] pr-[1px]">
      <Sv w={13} h={13}>
        <path d="M10 1h2v2h-2zM5 6h2v2H5zM10 6h2v2h-2zM0 11h2v2H0zM5 11h2v2H5zM10 11h2v2h-2z" fill="#b8b8b8" />
      </Sv>
    </div>
  </div>
);

export default function App() {
  const menus = [
    ["模型", "M"], ["视口", "W"], ["视图", "V"], ["材料", "E"], ["截面", "S"], ["剖面", "P"],
    ["复合", "C"], ["指派", "A"], ["特殊设置", "L"], ["特征", "U"], ["工具", "T"],
  ];
  return (
    <div className="relative flex h-[720px] w-[1280px] overflow-hidden bg-[#fafafa] font-['Noto_Sans','Noto_Sans_CJK_SC',sans-serif]">
      <div className="flex w-[1222px] shrink-0 flex-col">
        {/* title bar */}
        <div className="flex h-[22px] items-center border-t border-[#34465e] bg-gradient-to-b from-[#9db4d1] to-[#bfd2e7] pl-[2px] pr-[2px]">
          <AbaqusIcon s={16} />
          <span className="ml-[6px] text-[13px] text-[#27303c]">Abaqus/CAE 6.14-4 [Viewport: 1]</span>
          <div className="ml-auto flex gap-[3px]">
            <WinBtn><div className="h-[3px] w-[10px] rounded-[1px] border border-[#556] bg-white" /></WinBtn>
            <WinBtn><Sv w={12} h={10}><path d="M4 .5h7v6H4zM.5 3.500h7v6h-7z" fill="#dde" stroke="#445" /></Sv></WinBtn>
            <WinBtn red><span className="text-[11px] font-bold leading-none text-white">✕</span></WinBtn>
          </div>
        </div>
        {/* menu bar */}
        <div className="flex h-[23px] items-center bg-[#f5f6f7] pl-[5px] pr-[4px] text-[12px] text-[#333]">
          <div className="flex h-[13px] w-[13px] items-center justify-center border-2 border-[#3a5cb8] bg-white">
            <div className="h-[4px] w-[7px] bg-[#2a3c8c]" />
          </div>
          <div className="ml-[11px] flex items-center gap-[13.3px]">
            <MenuItem t="文件" k="F" />
            {menus.map(([t, k]) => (
              <MenuItem key={k} t={t} k={k} />
            ))}
            <span>Plug-ins</span>
            <MenuItem t="帮助" k="H" />
            <Sv w={14} h={14}>
              <path d="M1 1v10l3-2 2 4 2-1-2-4h4z" fill="#111" />
              <text x="8" y="9" fontSize="9" fontWeight="700" fill="#111">?</text>
            </Sv>
          </div>
          <div className="ml-auto flex gap-[4px]">
            <MdiBtn><div className="mt-[6px] h-[2px] w-[7px] bg-[#777]" /></MdiBtn>
            <MdiBtn><Sv w={9} h={9}><path d="M3 .5h5.500v5H3zM.5 3h5.500v5.500H.5z" fill="none" stroke="#777" /></Sv></MdiBtn>
            <MdiBtn><span className="text-[10px] font-bold leading-none text-[#777]">✕</span></MdiBtn>
          </div>
        </div>
        {/* toolbar 1 */}
        <div className="flex h-[27px] items-center">
          <div className="flex h-full items-center border-y border-[#c8c8c8] bg-[#f0f0f0] pl-[3px]">
            <div className="w-[5px]"><Grip /></div>
            <div className="flex w-[22px] justify-center"><Page /></div>
            <div className="flex w-[36px] justify-center"><Folder /></div>
            <div className="flex w-[97px] items-center justify-around">
              <Page />
              <Sv w={18} h={18}><rect x="1" y="1" width="16" height="16" fill="#334a8a" /></Sv>
              <Sv w={18} h={18}><rect x="1" y="1" width="16" height="16" fill="#8a2a2a" /></Sv>
            </div>
            <div className="flex w-6 justify-center"><MoveIco /></div>
            <div className="flex w-6 justify-center"><RotateIco /></div>
            <div className="flex w-6 justify-center"><Mag /></div>
            <div className="flex w-6 justify-center"><Mag box /></div>
            <div className="flex w-6 justify-center"><Fit /></div>
            <div className="flex w-6 justify-center"><UpDown /></div>
            <div className="w-[9px]"><Grip /></div>
            <div className="flex w-6 justify-center"><Ladder /></div>
            <div className="ml-px flex w-6 justify-center"><Ladder wide /></div>
            <div className="flex w-[9px] justify-center"><Grip /></div>
            <div className="ml-px"><CursorBtn /></div>
            <div className="ml-[2px] flex h-[23px] w-[67px] border border-[#a8a8a8] bg-white">
              <div className="flex-1 pl-[2px] text-[12px] leading-[21px] text-[#333]">全部</div>
              <DropBtn />
            </div>
            <div className="flex w-5 justify-center"><GraySq /></div>
            <div className="ml-[2px]"><Sep /></div>
            <div className="ml-[3px] flex w-[22px] justify-center"><WireBoxes /></div>
            <div className="ml-px flex w-6 justify-center"><RedRect /></div>
            <div className="flex w-6 justify-center"><RedDots /></div>
            <ActiveCube />
            <div className="w-[2px]" />
          </div>
          <div className="flex h-full flex-1 items-center self-stretch bg-[#f4f4f4]">
            <div className="ml-[14px] flex h-full items-center border-y border-[#c8c8c8] bg-[#f0f0f0]">
              <div className="w-[9px]"><Grip /></div>
              <div className="relative flex w-[44px] items-center text-[12px] text-[#333]">
                <span className="whitespace-nowrap">格式 %s</span>
                <div className="absolute left-[12px] top-0">
                  <Cube top="none" left="none" right="none" stroke="#6a5a2a" />
                </div>
              </div>
              <div className="flex w-[25px] justify-center"><Cube top="#fff" stroke="#8a6a2a" /></div>
              <div className="flex w-[21px] justify-center"><Cube top="#f0d880" left="#f0d070" right="#d8b050" /></div>
              <Sep />
              <div className="ml-[2px] w-[7px]"><Grip /></div>
              <div className="flex w-[24px] justify-center"><GridCube /></div>
              <div className="flex w-[24px] justify-center"><RedCube /></div>
              <div className="flex w-[25px] justify-center"><GreenCube /></div>
              <div className="ml-px"><Sep /></div>
              <div className="ml-[8px]"><InfoIco /></div>
              <div className="ml-[5px] w-[6px]"><Grip /></div>
              <div className="flex w-[24.5px] justify-center"><Axes kind="lu" a="Y" b="X" /></div>
              <div className="flex w-[24.5px] justify-center"><Axes kind="ru" a="Y" b="X" /></div>
              <div className="flex w-[24.5px] justify-center"><Axes kind="ld" a="Z" b="X" /></div>
              <div className="flex w-[24.5px] justify-center"><Axes kind="lu" a="Z" b="X" /></div>
              <div className="flex w-[24.5px] justify-center"><Axes kind="lu" a="Y" b="Z" /></div>
              <div className="flex w-[24.5px] justify-center"><Axes kind="ru" a="Y" b="Z" /></div>
              <div className="flex w-[24.5px] justify-center"><Triad /></div>
              {["1", "2", "3", "4"].map((d) => (
                <div key={d} className="flex w-6 justify-center text-[17px] font-bold leading-none text-[#c42a20]">{d}</div>
              ))}
              <div className="flex w-6 justify-center"><Triad curve /></div>
              <div className="w-[2px]" />
            </div>
          </div>
        </div>
        {/* toolbar 2 */}
        <div className="flex h-[25px] justify-end">
          <div className="flex h-full items-center bg-[#f0f0f0] pl-[2px] pr-[2px]">
            <Grip />
            <div className="ml-[9px]"><Venn side="l" /></div>
            <div className="ml-[3px]"><Venn side="r" /></div>
            <div className="ml-[4px] flex w-[16px] justify-center">
              <div className="h-[14px] w-[14px] rounded-full border border-[#c08830] bg-[#e8a840]" />
            </div>
            <div className="ml-[6px]"><HandBtn /></div>
            <div className="ml-[5px]"><Undo /></div>
            <div className="ml-[5px]"><Undo flip /></div>
            <div className="ml-[5px]"><Blocks /></div>
            <div className="ml-[4px]"><Tbl /></div>
            <div className="ml-[2px]"><Sep /></div>
            <div className="ml-[2px]"><Grip /></div>
            <div className="ml-[4px]"><Palette /></div>
            <div className="ml-px flex h-[22px] w-[129px] border border-[#a8a8a8] bg-white">
              <div className="flex-1 pl-[5px] text-[12px] leading-[20px] text-[#333]">属性默认值</div>
              <DropBtn />
            </div>
            <div className="ml-[4px]"><ShellCube /></div>
            <div className="ml-[4px] h-0 w-0 border-x-[4px] border-t-[4px] border-x-transparent border-t-black" />
            <div className="ml-[3px]"><Sep /></div>
            <div className="ml-[3px]"><Grip /></div>
            <div className="ml-[7px]"><SectionIco /></div>
            <div className="ml-[4px]"><Tbl /></div>
          </div>
        </div>
        <div className="flex h-[515px]">
          <LeftPanel />
          <Center />
        </div>
        <Bottom />
      </div>
      <Taskbar />
      {/* watermark */}
      <div className="absolute left-[25px] top-[34px] flex h-[57px] w-[168px] items-center justify-center rounded-[28px] bg-[#383838]/90 font-['Noto_Sans_CJK_SC',sans-serif] text-[34px] leading-none text-white">
        技术邻
      </div>
    </div>
  );
}
